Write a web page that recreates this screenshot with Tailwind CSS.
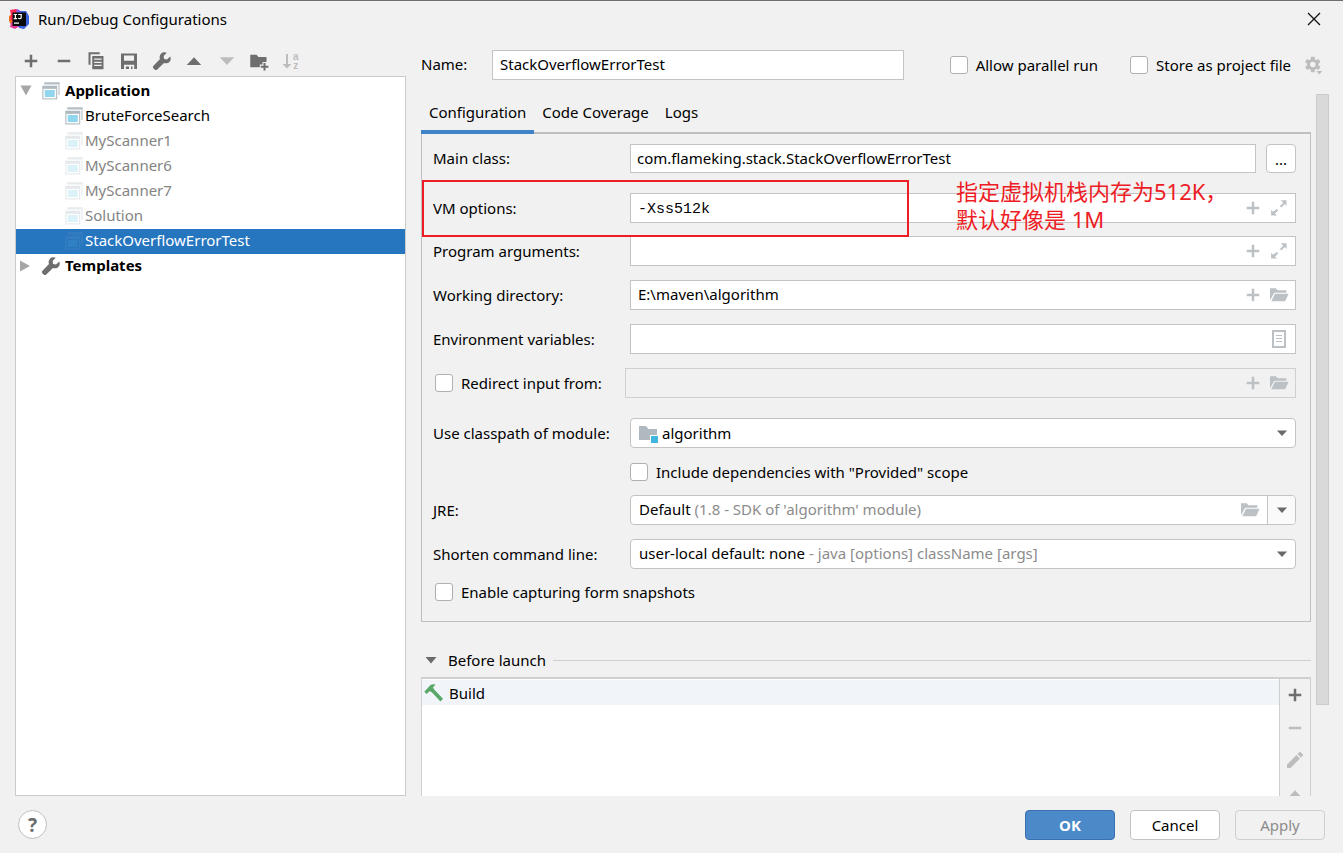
<!DOCTYPE html>
<html lang="en">
<head>
<meta charset="utf-8">
<meta name="viewport" content="width=device-width, initial-scale=1">
<title>Run/Debug Configurations</title>
<script src="https://cdn.jsdelivr.net/npm/@tailwindcss/browser@4"></script>
</head>
<body class="flex h-screen flex-col overflow-hidden border-t border-[#6e6e6e] bg-[#f1f1f1] font-['Noto_Sans','Noto_Sans_CJK_SC',sans-serif] text-[15px] leading-5 text-black">

<!-- Shared icon shapes -->
<svg class="hidden" aria-hidden="true">
  <symbol id="add" viewBox="0 0 16 16"><path d="M7 3h2v4h4v2H9v4H7V9H3V7h4z"/></symbol>
  <symbol id="remove" viewBox="0 0 16 16"><path d="M3 7h10v2H3z"/></symbol>
  <symbol id="up" viewBox="0 0 16 16"><path d="M2.2 11.2 8 5l5.800 6.200z"/></symbol>
  <symbol id="down" viewBox="0 0 16 16"><path d="M2.200 5h11.600L8 11.200z"/></symbol>
  <symbol id="caret" viewBox="0 0 16 16"><path d="M3.500 5.700h9L8 10.700z"/></symbol>
  <symbol id="wrench" viewBox="0 0 16 16"><path d="M14.600 4.300 12 6.700 9.700 6.300 9.300 4l2.500-2.600C10.200.6 8.400 1 7.200 2.100 6 3.400 5.800 5 6.400 6.400L1.200 11.800c-.6.600-.6 1.500 0 2.100l.9.900c.600.600 1.500.600 2.100 0L9.600 9.600c1.400.500 3.100.300 4.300-.9 1.200-1.200 1.400-2.900.7-4.400z"/></symbol>
  <symbol id="window" viewBox="0 0 16 16">
    <path fill="#b4bec4" d="M2.600 1H15v1.800H2.600z"/><path fill="#c9d1d5" d="M13.800 2.800H15v8.400h-1.200z"/>
    <path fill="#aeb9c0" d="M1 3.800h12v1.800H1z"/>
    <path fill="#b9c3c9" d="M1 5.600h12v9.200H1zM2 6.400v7.400h10V6.400z" fill-rule="evenodd"/>
    <path fill="#8fd6ee" d="M3 7.200h8v5.600H3z"/>
  </symbol>
  <symbol id="expand" viewBox="0 0 16 16"><path d="M9.500 1.800H14V6.300l-1.500-1.500-2.700 2.700-1.100-1.100 2.700-2.700zM6.300 8.700l1.100 1.100-2.600 2.600 1.500 1.500H1.700V9.400l1.500 1.500z"/></symbol>
  <symbol id="folder" viewBox="0 0 16 16"><path d="M.8 12.200V2.600h4.700l1.400 1.600h7v1.900H4.200z"/><path d="M4.800 7h10.900l-2.800 6H1.800z"/></symbol>
</svg>

<header class="flex h-[38px] shrink-0 items-center pr-[22px] pb-[2px] pl-2">
  <svg class="size-[22px]" viewBox="0 0 22 22" aria-hidden="true">
    <path fill="#f5751d" d="M1 8l3-2 3 9-4 2-2-4z"/>
    <path fill="#fe2857" d="M2 2l6-1 5 3-6 11-5-4 1-4z"/>
    <path fill="#e6399b" d="M3 15l6-7 6 12-5-1-3 2-5-2z"/>
    <path fill="#7b5cf0" d="M9 1l4 2 2 4-7-1z"/>
    <path fill="#3a62e0" d="M13 3l5 0 3 5v8l-5 5-5-1-1-4z"/>
    <path fill="#0a0a0a" d="M4.500 4.500h13.500v13.500H4.500z"/>
    <path stroke="#fff" stroke-width="1.200" fill="none" d="M5.700 6.500h3.400M7.400 6.500v4.200M5.700 10.700h3.400M10.200 6.500h3v2.900q0 1.300-1.600 1.300-.8 0-1.300-.6M6 15.200h5"/>
  </svg>
  <h1 class="ml-2 flex-1">Run/Debug Configurations</h1>
  <button aria-label="Close"><svg class="size-[14px]" viewBox="0 0 14 14" fill="none" stroke="#111" stroke-width="1.300"><path d="M1 1l12 12M13 1L1 13"/></svg></button>
</header>

<main class="flex min-h-0 flex-1 gap-[15px] pr-[14px] pl-[15px]">
  <section class="flex w-[391px] shrink-0 flex-col">
    <div class="mb-[5px] ml-[6px] flex w-[281px] justify-between pt-3 text-[#6e6e6e]">
      <button aria-label="Add"><svg class="size-5 fill-current"><use href="#add"/></svg></button>
      <button aria-label="Remove"><svg class="size-5 fill-current"><use href="#remove"/></svg></button>
      <button aria-label="Copy"><svg class="size-5 fill-current" viewBox="0 0 16 16"><path d="M2 1h9v1.600H3.600V11H2z"/><path fill-rule="evenodd" d="M5 4h9v10.500H5zM6.500 6v1h6V6zM6.500 8.500v1h6v-1zM6.500 11v1h6v-1z"/></svg></button>
      <button aria-label="Save"><svg class="size-5 fill-current" viewBox="0 0 16 16"><path fill-rule="evenodd" d="M1.600 2h12.800v12.400h-2.200V11H4v3.400H1.600zM4 3.600v4.200h8V3.600z"/><path d="M5.500 12.300H8v2.100H5.500zM9.600 12.300h1.200v2.100H9.600z"/></svg></button>
      <button aria-label="Edit templates"><svg class="size-5 fill-current"><use href="#wrench"/></svg></button>
      <button aria-label="Move up"><svg class="size-5 fill-current"><use href="#up"/></svg></button>
      <button aria-label="Move down" disabled class="text-[#bdbdbd]"><svg class="size-5 fill-current"><use href="#down"/></svg></button>
      <button aria-label="Create folder"><svg class="size-5 fill-current" viewBox="0 0 16 16"><path d="M1 3h5l1.600 1.800H14v4h-3.200v2H8.600V13H1z"/><path d="M11.600 9.500h1.600v2.200h2.300v1.600h-2.300v2.200h-1.600v-2.200H9.400v-1.600h2.200z"/></svg></button>
      <button aria-label="Sort" disabled class="flex h-5 w-5 items-center gap-px text-[#bdbdbd]">
        <svg class="h-5 w-[10px] shrink-0 fill-current" viewBox="0 0 10 20"><path d="M4 3h2v10h3.500L5 17.500.5 13H4z"/></svg>
        <span class="flex flex-col font-['Liberation_Sans',sans-serif] text-[10px] leading-[9px] font-bold"><span>a</span><span>z</span></span>
      </button>
    </div>
    <ul class="min-h-0 flex-1 border border-[#cbcbcb] bg-white pt-[2px]">
      <li class="flex h-[25px] items-center pb-[2px] font-bold"><svg class="size-5 fill-[#a6a6a6]" viewBox="0 0 20 20"><path d="M4.500 4.500h11L10 14.500z"/></svg><svg class="mr-1 ml-[5px] size-5"><use href="#window"/></svg><span class="pb-[2px]">Application</span></li>
      <li class="flex h-[25px] items-center gap-px pb-[2px] pl-12"><svg class="size-5"><use href="#window"/></svg><span class="pb-[2px]">BruteForceSearch</span></li>
      <li class="flex h-[25px] items-center gap-px pb-[2px] pl-12 text-[#848484]"><svg class="size-5 opacity-30"><use href="#window"/></svg><span class="pb-[2px]">MyScanner1</span></li>
      <li class="flex h-[25px] items-center gap-px pb-[2px] pl-12 text-[#848484]"><svg class="size-5 opacity-30"><use href="#window"/></svg><span class="pb-[2px]">MyScanner6</span></li>
      <li class="flex h-[25px] items-center gap-px pb-[2px] pl-12 text-[#848484]"><svg class="size-5 opacity-30"><use href="#window"/></svg><span class="pb-[2px]">MyScanner7</span></li>
      <li class="flex h-[25px] items-center gap-px pb-[2px] pl-12 text-[#848484]"><svg class="size-5 opacity-30"><use href="#window"/></svg><span class="pb-[2px]">Solution</span></li>
      <li class="flex h-[25px] items-center gap-px bg-[#2675bf] pb-[2px] pl-12 text-white"><svg class="size-5 opacity-10"><use href="#window"/></svg><span class="pb-[2px]">StackOverflowErrorTest</span></li>
      <li class="flex h-[25px] items-center pb-[2px] font-bold"><svg class="size-5 fill-[#a6a6a6]" viewBox="0 0 20 20"><path d="M4 4.500v11l10-5.500z"/></svg><svg class="mr-1 ml-[5px] size-5 fill-[#6e6e6e]"><use href="#wrench"/></svg><span class="pb-[2px]">Templates</span></li>
    </ul>
  </section>

  <section class="flex min-w-0 flex-1 flex-col pt-[11px]">
    <div class="mb-[14px] flex h-[30px] shrink-0 items-center pr-[6px]">
      <label for="name" class="w-[71px] shrink-0 pb-[2px]">Name:</label>
      <input id="name" type="text" value="StackOverflowErrorTest" class="h-[30px] min-w-0 flex-1 border border-[#c4c4c4] bg-white px-[7px] pb-[2px]">
      <label class="ml-[46px] flex items-center gap-2"><input type="checkbox" class="size-[18px] appearance-none rounded-[3px] border border-[#b0b0b0] bg-white">Allow parallel run</label>
      <label class="ml-8 flex items-center gap-2"><input type="checkbox" class="size-[18px] appearance-none rounded-[3px] border border-[#b0b0b0] bg-white">Store as project file</label>
      <button aria-label="Storage options" class="ml-3"><svg class="size-5 fill-[#bdbdbd]" viewBox="0 0 20 20">
        <circle cx="9.800" cy="9.500" r="4.300" fill="none" stroke="#bdbdbd" stroke-width="3"/>
        <g stroke="#bdbdbd" stroke-width="3.800"><path d="M9.800 1.700v3.800M9.800 13.500v3.800"/><path d="M9.800 1.700v3.800M9.800 13.500v3.800" transform="rotate(60 9.800 9.500)"/><path d="M9.800 1.700v3.800M9.800 13.500v3.800" transform="rotate(120 9.800 9.500)"/></g>
        <path stroke="#f1f1f1" d="M12.300 15.500h8l-4 4.500z"/></svg></button>
    </div>

    <div class="flex min-h-0 flex-1 gap-[5px]">
      <div class="flex min-w-0 flex-1 flex-col overflow-hidden">
        <nav class="flex h-10 shrink-0 border-b-2 border-[#bfbfbf]">
          <button class="-mb-[2px] border-b-4 border-[#3f83c9] px-2">Configuration</button>
          <button class="px-2 pb-[2px]">Code Coverage</button>
          <button class="px-2 pb-[2px]">Logs</button>
        </nav>

        <form class="relative shrink-0 border border-t-0 border-[#bfbfbf] pt-[10px] pr-[14px] pb-5 pl-[11px]">
          <div class="flex items-center">
            <label for="main" class="w-[197px] shrink-0 pb-[2px]">Main class:</label>
            <input id="main" type="text" value="com.flameking.stack.StackOverflowErrorTest" class="h-[29px] min-w-0 flex-1 border border-[#c4c4c4] bg-white px-[6px] pb-[2px]">
            <button type="button" class="ml-[10px] h-[29px] w-[30px] rounded-[4px] border border-[#c4c4c4] bg-white">...</button>
          </div>
          <div class="mt-5 flex items-center">
            <label for="vm" class="w-[197px] shrink-0">VM options:</label>
            <div class="flex h-[30px] min-w-0 flex-1 items-center gap-[6px] border border-[#c4c4c4] bg-white pr-[6px] pl-[7px] text-[#bcc1c5]">
              <input id="vm" type="text" value="-Xss512k" class="min-w-0 flex-1 pt-1 font-['Liberation_Mono',monospace] text-black">
              <button type="button" aria-label="Insert macros"><svg class="size-5 fill-current"><use href="#add"/></svg></button>
              <button type="button" aria-label="Expand"><svg class="size-5 fill-current"><use href="#expand"/></svg></button>
            </div>
          </div>
          <div class="mt-[13px] flex items-center">
            <label for="args" class="w-[197px] shrink-0">Program arguments:</label>
            <div class="flex h-[30px] min-w-0 flex-1 items-center gap-[6px] border border-[#c4c4c4] bg-white pr-[6px] pl-[7px] text-[#bcc1c5]">
              <input id="args" type="text" class="min-w-0 flex-1 text-black">
              <button type="button" aria-label="Insert macros"><svg class="size-5 fill-current"><use href="#add"/></svg></button>
              <button type="button" aria-label="Expand"><svg class="size-5 fill-current"><use href="#expand"/></svg></button>
            </div>
          </div>
          <div class="mt-[14px] flex items-center">
            <label for="dir" class="w-[197px] shrink-0">Working directory:</label>
            <div class="flex h-[30px] min-w-0 flex-1 items-center gap-[6px] border border-[#c4c4c4] bg-white pr-[6px] pl-[7px] text-[#bcc1c5]">
              <input id="dir" type="text" value="E:\maven\algorithm" class="min-w-0 flex-1 pb-[2px] text-black">
              <button type="button" aria-label="Insert macros"><svg class="size-5 fill-current"><use href="#add"/></svg></button>
              <button type="button" aria-label="Browse"><svg class="size-5 fill-current"><use href="#folder"/></svg></button>
            </div>
          </div>
          <div class="mt-[14px] flex items-center">
            <label for="env" class="w-[197px] shrink-0">Environment variables:</label>
            <div class="flex h-[30px] min-w-0 flex-1 items-center border border-[#c4c4c4] bg-white pr-[6px] pl-[7px] text-[#bcc1c5]">
              <input id="env" type="text" class="min-w-0 flex-1 text-black">
              <button type="button" aria-label="Edit environment variables"><svg class="size-5 fill-current" viewBox="0 0 20 20"><path fill-rule="evenodd" d="M3 1h14v18H3zM5 3v14h10V3z"/><path d="M7 6h6v1H7zM7 9h6v1H7zM7 12h6v1H7z"/></svg></button>
            </div>
          </div>
          <div class="mt-[14px] flex items-center">
            <label class="flex w-[192px] shrink-0 items-center gap-2 pl-[2px]"><input type="checkbox" class="size-[18px] appearance-none rounded-[3px] border border-[#b0b0b0] bg-white">Redirect input from:</label>
            <div class="flex h-[30px] min-w-0 flex-1 items-center gap-[6px] border border-[#d0d0d0] pr-[6px] pl-[7px] text-[#bcc1c5]">
              <input type="text" disabled aria-label="Redirect input from" class="min-w-0 flex-1">
              <button type="button" disabled aria-label="Insert macros"><svg class="size-5 fill-current"><use href="#add"/></svg></button>
              <button type="button" disabled aria-label="Browse"><svg class="size-5 fill-current"><use href="#folder"/></svg></button>
            </div>
          </div>
          <div class="mt-[20px] flex items-center">
            <label for="module" class="w-[197px] shrink-0">Use classpath of module:</label>
            <div class="flex h-[30px] min-w-0 flex-1 items-center rounded-[4px] border border-[#c4c4c4] bg-white pr-1 pl-[7px]">
              <svg class="mr-1 size-5" viewBox="0 0 20 20" aria-hidden="true"><path fill="#afb9bf" d="M1 3h7l2.500 3H19v6h-7v5H1z"/><path fill="#40b6e0" d="M13 13h7v7h-7z"/></svg>
              <select id="module" class="min-w-0 flex-1 appearance-none"><option>algorithm</option></select>
              <svg class="size-[18px] fill-[#6a6a6a]" aria-hidden="true"><use href="#caret"/></svg>
            </div>
          </div>
          <label class="mt-[15px] ml-[197px] flex h-[18px] items-center gap-2"><input type="checkbox" class="size-[18px] appearance-none rounded-[3px] border border-[#b0b0b0] bg-white">Include dependencies with "Provided" scope</label>
          <div class="mt-[14px] flex items-center">
            <label for="jre" class="w-[197px] shrink-0">JRE:</label>
            <div class="flex h-[30px] min-w-0 flex-1 items-center overflow-hidden rounded-[4px] border border-[#c4c4c4] bg-white pl-2">
              <select id="jre" class="field-sizing-content appearance-none pb-[2px]"><option>Default</option></select>
              <span class="ml-1 min-w-0 flex-1 truncate pb-[2px] text-[#8c8c8c]">(1.8 - SDK of 'algorithm' module)</span>
              <button type="button" aria-label="Browse" class="mr-[7px] text-[#bcc1c5]"><svg class="size-5 fill-current"><use href="#folder"/></svg></button>
              <span class="flex h-full w-7 items-center justify-center border-l border-[#c4c4c4] bg-[#fafafa]"><svg class="size-[18px] fill-[#6a6a6a]" aria-hidden="true"><use href="#caret"/></svg></span>
            </div>
          </div>
          <div class="mt-[14px] flex items-center">
            <label for="shorten" class="w-[197px] shrink-0">Shorten command line:</label>
            <div class="flex h-[30px] min-w-0 flex-1 items-center rounded-[4px] border border-[#c4c4c4] bg-white pr-1 pl-2">
              <select id="shorten" class="field-sizing-content appearance-none pb-[2px]"><option>user-local default: none</option></select>
              <span class="ml-1 min-w-0 flex-1 truncate pb-[2px] text-[#8c8c8c]">- java [options] className [args]</span>
              <svg class="size-[18px] fill-[#6a6a6a]" aria-hidden="true"><use href="#caret"/></svg>
            </div>
          </div>
          <label class="mt-[14px] ml-[2px] flex h-[18px] items-center gap-2"><input type="checkbox" class="size-[18px] appearance-none rounded-[3px] border border-[#b0b0b0] bg-white">Enable capturing form snapshots</label>

          <!-- Red annotation over the VM options row -->
          <div class="pointer-events-none absolute top-[46px] left-0 h-[57px] w-[487px] border-2 border-[#ee1c25]"></div>
          <p class="pointer-events-none absolute top-[43px] left-[534px] text-[22px] leading-7 whitespace-nowrap text-[#ee1c25]">指定虚拟机栈内存为512K，<br>默认好像是 1M</p>
        </form>

        <div class="mt-[26px] mb-[5px] flex h-6 shrink-0 items-center">
          <svg class="mr-[7px] size-5 fill-[#6a6a6a]" aria-hidden="true" viewBox="0 0 20 20"><path d="M4.500 7h11L10 13.500z"/></svg>
          <h2>Before launch</h2>
          <div class="ml-[7px] flex-1 border-t border-[#cfcfcf]"></div>
        </div>
        <div class="flex min-h-0 flex-1 overflow-hidden border-x border-t-2 border-[#cfcfcf]">
          <ul class="flex-1 bg-white pt-px">
            <li class="flex h-[25px] items-center gap-[5px] bg-[#f1f5fa] pl-[2px]">
              <svg class="size-5" viewBox="0 0 20 20" aria-hidden="true"><path fill="#59a869" d="M.3 8.800 6.200 2.300c1.700-1.200 3.500-1.300 5.200-.6L9 4.600l1.200 1.900 8.800 9.300-2.600 2.800-8.800-9.700-2.100-.7-2.900 2.900z"/></svg>Build
            </li>
          </ul>
          <div class="flex w-[31px] shrink-0 flex-col items-center gap-[13px] border-l border-[#cfcfcf] pt-[6px] text-[#bdbdbd]">
            <button aria-label="Add task" class="h-5 text-[#6e6e6e]"><svg class="size-5 fill-current"><use href="#add"/></svg></button>
            <button aria-label="Remove task" disabled class="h-5"><svg class="size-5 fill-current"><use href="#remove"/></svg></button>
            <button aria-label="Edit task" disabled class="h-5"><svg class="size-5 fill-current" viewBox="0 0 20 20"><path d="M2 13.500 11.500 4l3.500 3.500L5.500 17H2zM12.500 3l1.700-1.700c.5-.5 1-.5 1.500 0l2 2c.500.500.500 1 0 1.500L16 6.500z"/></svg></button>
            <button aria-label="Move task up" disabled class="h-5"><svg class="size-5 fill-current"><use href="#up"/></svg></button>
          </div>
        </div>
      </div>
      <div class="h-[87%] w-[13px] shrink-0 border border-[#cbcbcb] bg-[#d9d9d9]"></div>
    </div>
  </section>
</main>

<footer class="flex h-[57px] shrink-0 gap-[15px] pt-[14px] pr-[18px] pl-[18px]">
  <button aria-label="Help" class="mr-auto size-[29px] rounded-full border border-[#c0c0c0] bg-white text-[19px] font-bold text-[#6a6a6a]">?</button>
  <button class="h-[30px] w-[90px] rounded-[4px] border border-[#3a70b0] bg-[#4c89c9] font-bold text-white">OK</button>
  <button class="h-[30px] w-[90px] rounded-[4px] border border-[#c4c4c4] bg-white">Cancel</button>
  <button disabled class="h-[30px] w-[90px] rounded-[4px] border border-[#cfcfcf] text-[#8c8c8c]">Apply</button>
</footer>
</body>
</html>
